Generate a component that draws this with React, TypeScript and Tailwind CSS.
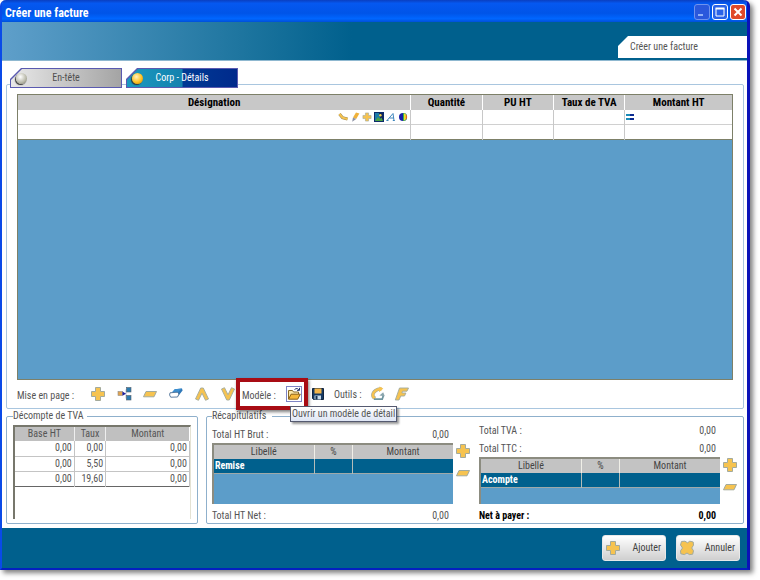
import { useState } from "react";
import type { ReactNode } from "react";
import clsx from "clsx";

const GOLD = "#f6c350";
const GOLD_EDGE = "#a3aa9c";

function PlusIcon({ className = "size-4" }: { className?: string }) {
  return (
    <svg viewBox="0 0 16 16" className={className}>
      <path
        d="M5.5 1.5h5v4h4v5h-4v4h-5v-4h-4v-5h4z"
        fill={GOLD}
        stroke={GOLD_EDGE}
        strokeLinejoin="round"
      />
    </svg>
  );
}

function MinusIcon() {
  return (
    <svg viewBox="0 0 16 16" className="size-4">
      <path d="M4 5.5h10.5l-2.5 5.3H1.5z" fill={GOLD} stroke={GOLD_EDGE} />
    </svg>
  );
}

function TreeIcon() {
  return (
    <svg viewBox="0 0 16 16" className="size-4">
      <path d="M6 7.5h4M10 3.5v9M10 3.5h2M10 12h2" stroke="#b9c3d6" fill="none" />
      <rect x="2" y="5.5" width="4.5" height="4" fill="#e0a350" stroke="#8e8a86" strokeWidth=".6" />
      <path d="M6.5 5.5L10 7.7 6.5 9.8z" fill="#1d1d9c" />
      <rect x="10.5" y="1.5" width="4.5" height="4.5" fill="#2b7cb0" stroke="#555f6c" strokeWidth=".6" />
      <rect x="10.5" y="9.5" width="4.5" height="4.5" fill="#2b7cb0" stroke="#555f6c" strokeWidth=".6" />
    </svg>
  );
}

function EraserIcon() {
  return (
    <svg viewBox="0 0 16 16" className="size-4">
      <path d="M6.5 3.2L14 2.4l.6 2.2-4.2 5.2-2.6-3.2z" fill="#2f78b8" />
      <path d="M6.5 3.2L14 2.4l-4 3.8-6.5.6z" fill="#3d8fd0" />
      <path d="M2 6.8l7.5-.6L11 8l-1.5 3-6.8.2L1.6 9z" fill="#fff" stroke="#4c6f96" strokeWidth=".9" />
    </svg>
  );
}

function ChevronIcon({ down }: { down?: boolean }) {
  return (
    <svg viewBox="0 0 16 16" className={clsx("size-4", down && "rotate-180")}>
      <path
        d="M6.7 2h2.6l5.2 11-3 1.3L8 7.2l-3.5 7.1-3-1.3z"
        fill={GOLD}
        stroke={GOLD_EDGE}
        strokeWidth=".9"
      />
    </svg>
  );
}

function OpenIcon() {
  return (
    <svg viewBox="0 0 16 16" className="size-4">
      <rect x=".5" y=".5" width="15" height="15" fill="#fff" stroke="#7d84c4" />
      <path d="M2.5 13V4.5h4l1 1.5h5v2" fill="#fbe7a8" stroke="#8a6a28" />
      <path d="M2.5 13.2l2.6-5h9.2l-2.6 5z" fill="#f5b73a" stroke="#8a5f18" />
      <path d="M8.5 3.5c2-1.6 3.6-1 4.4.4M13.5 1.8v2.6H11" fill="none" stroke="#26386f" />
    </svg>
  );
}

function SaveIcon() {
  return (
    <svg viewBox="0 0 16 16" className="size-4">
      <path d="M2.5 2.5h11v11h-10l-1-1z" fill="#173a63" stroke="#10243f" />
      <rect x="4.5" y="2.5" width="7" height="5" fill="#f4b548" />
      <rect x="4.5" y="9.5" width="6.5" height="4" fill="#c9dcec" />
      <rect x="5.5" y="10" width="2" height="3.5" fill="#15304f" />
    </svg>
  );
}

function RefreshIcon() {
  return (
    <svg viewBox="0 0 16 16" className="size-4">
      <path d="M11.5 3.2C7.5 2.4 3 5.5 2.8 9c0 1.6 1 2.8 2.4 3.4" fill="none" stroke={GOLD_EDGE} strokeWidth="3.4" />
      <path d="M11.5 3.2C7.5 2.4 3 5.5 2.8 9c0 1.6 1 2.8 2.4 3.4" fill="none" stroke={GOLD} strokeWidth="2.4" />
      <path d="M9.5.4l3.8 2.2L9 6.2z" fill={GOLD} />
      <path d="M4 13.2h8.2c.6-1.2 1-2.4 1-4" fill="none" stroke="#6f96a0" strokeWidth="1.8" />
      <path d="M9.4 9.6l3.8-3.4 1.6 4z" fill="#8aa5ad" />
    </svg>
  );
}

function FontIcon() {
  return (
    <svg viewBox="0 0 16 16" className="size-4">
      <path
        d="M5.5 2h9l-1.5 3.2H8.6L7.9 7h4l-1.4 3H6.8L5 14H1.3z"
        fill={GOLD}
        stroke={GOLD_EDGE}
        strokeWidth=".9"
      />
    </svg>
  );
}

function CrossIcon() {
  return (
    <svg viewBox="0 0 16 16" className="size-4">
      <path
        d="M2.5 1.5l3.5-.3 2.5 1.6 2.3-1.6 3.4.8.3 3.2L12.7 8l1.8 2.8-.8 3.4-3.3.4L8 13l-2.6 1.6-3.6-.8-.3-3L3.5 8 1.5 5z"
        fill={GOLD}
        stroke={GOLD_EDGE}
      />
    </svg>
  );
}

// Row tools shown at the right of the designation cell
function LineTools() {
  return (
    <div className="flex items-center justify-end gap-0.5 pr-0.5">
      <button aria-label="Lier">
        <svg viewBox="0 0 10 10" className="size-[10px]">
          <path d="M1.5 2l3 3.6L9.5 7" fill="none" stroke="#9b8a55" strokeWidth="3" />
          <path d="M1.5 2l3 3.6L9.5 7" fill="none" stroke={GOLD} strokeWidth="2" />
        </svg>
      </button>
      <button aria-label="Modifier">
        <svg viewBox="0 0 10 10" className="size-[10px]">
          <path d="M6 .4l3.4 1.2L6.2 7 3 5.6z" fill="#f0b23a" />
          <path d="M3 5.6L6.2 7 2.2 9.8z" fill="#8d93a5" />
        </svg>
      </button>
      <button aria-label="Insérer">
        <PlusIcon className="size-[10px]" />
      </button>
      <button aria-label="Image">
        <svg viewBox="0 0 10 10" className="size-[10px]">
          <rect x=".5" y=".5" width="9" height="9" fill="#1c7ba8" stroke="#0c2c6b" />
          <path d="M5 1h4v8H7z" fill="#10245e" />
          <path d="M1 9l3-4 2 2 1.5-1.5L9 9z" fill="#4da345" />
          <circle cx="6.4" cy="3.2" r="1.2" fill="#f4d64c" />
        </svg>
      </button>
      <button aria-label="Police">
        <svg viewBox="0 0 10 10" className="size-[10px]">
          <path d="M1 8.5L7 1.5l1 7M3.5 6h4M.5 8.5h2M6.8 8.5h2" fill="none" stroke="#3e86bd" />
        </svg>
      </button>
      <button aria-label="Couleur">
        <svg viewBox="0 0 10 10" className="size-[10px]">
          <circle cx="5" cy="5" r="4" fill="#1a1fa8" />
          <path d="M5 1a4 4 0 0 1 0 8z" fill="#35b34a" />
          <path d="M6 1.2a4 4 0 0 1 0 7.6z" fill="#f2dc2e" />
          <path d="M7.8 2.2a4 4 0 0 1 0 5.6z" fill="#e2622b" />
        </svg>
      </button>
    </div>
  );
}

function IconButton({ label, children }: { label: string; children: ReactNode }) {
  return (
    <button aria-label={label} className="size-4 shrink-0">
      {children}
    </button>
  );
}

function Tab({
  label,
  active,
  onClick,
}: {
  label: string;
  active: boolean;
  onClick: () => void;
}) {
  return (
    <button
      role="tab"
      aria-selected={active}
      onClick={onClick}
      className="h-5 w-28 bg-[#5a5ab0] p-px [clip-path:polygon(11px_0,100%_0,100%_100%,0_100%,0_11px)]"
    >
      <span
        className={clsx(
          "flex h-full items-center pr-4 pl-[5px] [clip-path:polygon(11px_0,100%_0,100%_100%,0_100%,0_11px)]",
          active
            ? "bg-[linear-gradient(90deg,#1a9ac0,#1482ae_50%,#003a94_51%,#002a8c)] text-white"
            : "bg-[linear-gradient(90deg,#e8e8e8,#a4a4a4)] text-[#505050]",
        )}
      >
        <span
          className={clsx(
            "size-[11px] rounded-full shadow-[-1px_1px_1px_#333]",
            active
              ? "bg-[radial-gradient(circle_at_40%_35%,#fff3c0,#ffc020_55%,#b97a00)]"
              : "bg-[radial-gradient(circle_at_40%_35%,#fff,#b8b8a8_60%,#6a6a5c)]",
          )}
        />
        <span className="flex-1 text-center">{label}</span>
      </span>
    </button>
  );
}

const vatRows = [
  ["0,00", "0,00", "0,00"],
  ["0,00", "5,50", "0,00"],
  ["0,00", "19,60", "0,00"],
];

function AmountLine({ label, value, bold }: { label: string; value: string; bold?: boolean }) {
  return (
    <div
      className={clsx(
        "mr-[18px] flex h-4 items-center justify-between pt-px pr-1",
        bold ? "font-bold text-black" : "text-[#555]",
      )}
    >
      <span>{label}</span>
      <span>{value}</span>
    </div>
  );
}

function AdjustTable({ row }: { row: string }) {
  return (
    <div className="mt-px flex flex-1 gap-0.5">
      <div className="flex-1 border-t-2 border-l-2 border-[#8c8c80] bg-[#5c9dc9]">
        <table className="w-full table-fixed border-collapse">
          <colgroup>
            <col className="w-[42%]" />
            <col className="w-[16%]" />
            <col className="w-[42%]" />
          </colgroup>
          <thead>
            <tr className="h-[14px] bg-[#c3c3c3] text-[#444]">
              <th className="border-r border-[#f0efe8] p-0 font-normal">Libellé</th>
              <th className="border-r border-[#f0efe8] p-0 font-normal">%</th>
              <th className="p-0 font-normal">Montant</th>
            </tr>
          </thead>
          <tbody>
            <tr className="h-[14px] border-b border-[#9fa9a9] bg-[#00608d] text-white">
              <td className="border-r border-[#b4bcb8] p-0 pl-px font-bold">{row}</td>
              <td className="border-r border-[#b4bcb8] p-0" />
              <td className="p-0" />
            </tr>
          </tbody>
        </table>
      </div>
      <div className="flex flex-col gap-1.5">
        <IconButton label={`Ajouter ${row}`}>
          <PlusIcon />
        </IconButton>
        <IconButton label={`Retirer ${row}`}>
          <MinusIcon />
        </IconButton>
      </div>
    </div>
  );
}

export default function App() {
  const [tab, setTab] = useState("details");

  return (
    <div className="flex min-h-screen flex-col bg-white pr-2.5 pb-2.5 font-['Roboto_Condensed',Roboto,'Liberation_Sans',sans-serif] text-[10px] leading-3">
      <div className="flex flex-1 flex-col rounded-t-md border-r-3 border-b-2 border-l-2 border-l-[#0a4ae8] border-r-[#0a12b8] border-b-[#0420c0] bg-white shadow-[3px_3px_5px_rgba(0,0,0,0.5)]">
        {/* Title bar */}
        <div className="flex h-[22px] items-center justify-between rounded-t-sm bg-[linear-gradient(#0a3fc0,#0558f0_15%,#0054e8_60%,#0066ff_85%,#0050d8)] pl-[3px]">
          <h1 className="pt-1 text-[12px] font-bold text-white">Créer une facture</h1>
          <div className="flex gap-0.5 pt-0.5 pr-px">
            <button
              aria-label="Réduire"
              className="size-4 rounded-[3px] border border-[#6f93ee] bg-[#2a58dc]"
            >
              <svg viewBox="0 0 14 14">
                <path d="M3 10h5" stroke="#8fb0f8" strokeWidth="2" />
              </svg>
            </button>
            <button
              aria-label="Agrandir"
              className="size-4 rounded-[3px] border border-white bg-[#2a62e8]"
            >
              <svg viewBox="0 0 14 14">
                <path d="M3 3.5h8v7.5H3z" fill="none" stroke="#fff" />
                <path d="M2.5 3.5h9" stroke="#fff" strokeWidth="2" />
              </svg>
            </button>
            <button
              aria-label="Fermer"
              className="size-4 rounded-[3px] border border-white bg-[#e0492a]"
            >
              <svg viewBox="0 0 14 14">
                <path d="M3.5 3.5l7 7M10.5 3.5l-7 7" stroke="#fff" strokeWidth="2" />
              </svg>
            </button>
          </div>
        </div>

        {/* Banner */}
        <div className="flex h-[39px] items-end justify-end border-b border-[#8fb8d0] bg-[linear-gradient(90deg,#5f9fca,#1c749e_33%,#00608d_47%)] pb-0.5">
          <div className="flex h-[22px] w-[129px] items-center bg-white pl-3 text-[#555] [clip-path:polygon(10px_0,100%_0,100%_100%,0_100%,0_10px)]">
            Créer une facture
          </div>
        </div>

        <main className="flex flex-1 flex-col pt-[7px] pr-[3px] pb-1 pl-1">
          {/* Tabs */}
          <div role="tablist" className="relative z-10 flex gap-1 pl-1">
            <Tab label="En-tête" active={tab === "header"} onClick={() => setTab("header")} />
            <Tab label="Corp - Détails" active={tab === "details"} onClick={() => setTab("details")} />
          </div>

          <section className="-mt-1 flex flex-1 flex-col rounded-xs border border-[#a9c6df] px-2.5 pt-[9px]">
            <div className="flex-1 border border-[#7d8068] bg-[#5c9dc9]">
              <table className="w-full table-fixed border-collapse bg-white">
                <colgroup>
                  <col className="w-[55%]" />
                  <col className="w-[10%]" />
                  <col className="w-[10%]" />
                  <col className="w-[10%]" />
                  <col className="w-[15%]" />
                </colgroup>
                <thead>
                  <tr className="h-[15px] bg-[#c8c8c8] text-[11px] text-black">
                    <th className="border-r border-white p-0">Désignation</th>
                    <th className="border-r border-white p-0">Quantité</th>
                    <th className="border-r border-white p-0">PU HT</th>
                    <th className="border-r border-white p-0">Taux de TVA</th>
                    <th className="p-0">Montant HT</th>
                  </tr>
                </thead>
                <tbody>
                  <tr className="h-[14px] border-b border-[#d0d0d0]">
                    <td className="border-r border-[#c8c8c8] p-0">
                      <LineTools />
                    </td>
                    <td className="border-r border-[#c8c8c8] p-0" />
                    <td className="border-r border-[#c8c8c8] p-0" />
                    <td className="border-r border-[#c8c8c8] p-0" />
                    <td className="p-0">
                      <svg viewBox="0 0 8 6" className="ml-px h-1.5 w-2">
                        <path d="M0 1h4M0 5h4" stroke="#1a8ab8" strokeWidth="2" />
                        <path d="M4 1h4M4 5h4" stroke="#0a2a90" strokeWidth="2" />
                      </svg>
                    </td>
                  </tr>
                  <tr className="h-[15px] border-b border-[#7d8068]">
                    <td className="border-r border-[#c8c8c8] p-0" />
                    <td className="border-r border-[#c8c8c8] p-0" />
                    <td className="border-r border-[#c8c8c8] p-0" />
                    <td className="border-r border-[#c8c8c8] p-0" />
                    <td className="p-0" />
                  </tr>
                </tbody>
              </table>
            </div>

            {/* Toolbar */}
            <div className="flex h-7 items-center whitespace-nowrap text-[#555]">
              <span className="w-[73px] pt-1">Mise en page :</span>
              <div className="flex gap-2.5">
                <IconButton label="Ajouter une ligne">
                  <PlusIcon />
                </IconButton>
                <IconButton label="Insérer">
                  <TreeIcon />
                </IconButton>
                <IconButton label="Supprimer">
                  <MinusIcon />
                </IconButton>
                <IconButton label="Effacer">
                  <EraserIcon />
                </IconButton>
                <IconButton label="Monter">
                  <ChevronIcon />
                </IconButton>
                <IconButton label="Descendre">
                  <ChevronIcon down />
                </IconButton>
              </div>
              <div className="relative ml-1.5 flex w-[60px] items-center justify-between">
                <span className="pt-1">Modèle :</span>
                <IconButton label="Ouvrir">
                  <OpenIcon />
                </IconButton>
                <div className="pointer-events-none absolute -inset-x-1.5 -inset-y-2 z-10 border-4 border-[#a80c14] shadow-[1px_2px_3px_rgba(0,0,0,0.5)]" />
                <div
                  role="tooltip"
                  className="absolute top-full left-12 z-20 mt-1 border border-[#555a70] bg-[linear-gradient(#fff,#dfe6f5)] px-px py-px shadow-[2px_2px_2px_rgba(0,0,0,0.4)]"
                >
                  Ouvrir un modèle de détail
                </div>
              </div>
              <div className="ml-2 flex items-center gap-2">
                <IconButton label="Enregistrer">
                  <SaveIcon />
                </IconButton>
                <span className="w-7 pt-0.5">Outils :</span>
                <IconButton label="Actualiser">
                  <RefreshIcon />
                </IconButton>
                <IconButton label="Police">
                  <FontIcon />
                </IconButton>
              </div>
            </div>
          </section>

          <div className="mt-px flex gap-2">
            <fieldset className="flex w-[26%] flex-col rounded-xs border border-[#8fb0cc] px-1.5 pb-1">
              <legend className="pr-1 text-[#555]">Décompte de TVA</legend>
              <div className="mt-[3px] flex-1 border-t-2 border-r border-l-2 border-t-[#77776c] border-r-[#e4e2d4] border-l-[#77776c]">
                <table className="w-full table-fixed border-collapse text-[#555]">
                  <colgroup>
                    <col className="w-[34%]" />
                    <col className="w-[18%]" />
                    <col className="w-[48%]" />
                  </colgroup>
                  <thead>
                    <tr className="h-[14px] bg-[#c0c0c0]">
                      <th className="border-r border-[#eee] p-0 font-normal">Base HT</th>
                      <th className="border-r border-[#eee] p-0 font-normal">Taux</th>
                      <th className="p-0 font-normal">Montant</th>
                    </tr>
                  </thead>
                  <tbody>
                    {vatRows.map((row) => (
                      <tr
                        key={row[1]}
                        className="h-[15px] border-b border-[#c4c4c4] text-right last:border-[#666]"
                      >
                        <td className="border-r border-[#c4c4c4] p-0 pr-0.5">{row[0]}</td>
                        <td className="border-r border-[#c4c4c4] p-0 pr-0.5">{row[1]}</td>
                        <td className="border-r border-[#c4c4c4] p-0 pr-0.5">{row[2]}</td>
                      </tr>
                    ))}
                  </tbody>
                </table>
              </div>
            </fieldset>

            <fieldset className="flex flex-1 flex-col rounded-xs border border-[#8fb0cc] px-[5px]">
              <legend className="pr-1.5 text-[#555]">Récapitulatifs</legend>
              <div className="grid min-h-[101px] flex-1 grid-cols-2 gap-2">
                <div className="flex flex-col pt-1">
                  <AmountLine label="Total HT Brut :" value="0,00" />
                  <AdjustTable row="Remise" />
                  <div className="mt-[3px]">
                    <AmountLine label="Total HT Net :" value="0,00" />
                  </div>
                </div>
                <div className="flex flex-col">
                  <AmountLine label="Total TVA :" value="0,00" />
                  <div className="mt-0.5">
                    <AmountLine label="Total TTC :" value="0,00" />
                  </div>
                  <AdjustTable row="Acompte" />
                  <div className="mt-[3px]">
                    <AmountLine label="Net à payer :" value="0,00" bold />
                  </div>
                </div>
              </div>
            </fieldset>
          </div>
        </main>

        {/* Actions */}
        <footer className="flex h-10 items-center justify-end gap-2.5 bg-[#00608d] pr-[7px]">
          <button className="flex h-[26px] w-16 items-center justify-between rounded-[3px] border border-[#e8e8e8] bg-[linear-gradient(#fff,#cfcfcf)] pr-1 pl-0.5 text-[#444]">
            <PlusIcon />
            Ajouter
          </button>
          <button className="flex h-[26px] w-16 items-center justify-between rounded-[3px] border border-[#e8e8e8] bg-[linear-gradient(#fff,#cfcfcf)] pr-1 pl-0.5 text-[#444]">
            <CrossIcon />
            Annuler
          </button>
        </footer>
      </div>
    </div>
  );
}
